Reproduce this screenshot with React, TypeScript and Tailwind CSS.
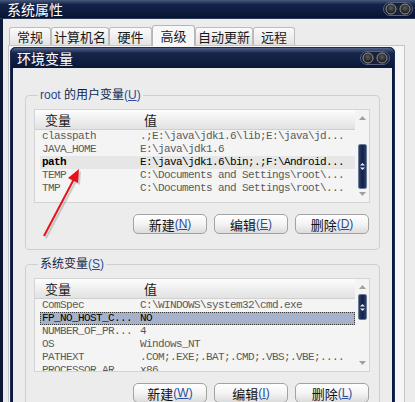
import React from 'react';

const tabs = [
  { label: '常规', w: 'w-[42px]' },
  { label: '计算机名', w: 'w-[58px]' },
  { label: '硬件', w: 'w-[43px]' },
  { label: '高级', w: 'w-[43px]', active: true },
  { label: '自动更新', w: 'w-[58px]' },
  { label: '远程', w: 'w-[42px]' },
];

const userVars = [
  { name: 'classpath', value: '.;E:\\java\\jdk1.6\\lib;E:\\java\\jd...' },
  { name: 'JAVA_HOME', value: 'E:\\java\\jdk1.6' },
  { name: 'path', value: 'E:\\java\\jdk1.6\\bin;.;F:\\Android...', hot: true },
  { name: 'TEMP', value: 'C:\\Documents and Settings\\root\\...' },
  { name: 'TMP', value: 'C:\\Documents and Settings\\root\\...' },
];

const sysVars = [
  { name: 'ComSpec', value: 'C:\\WINDOWS\\system32\\cmd.exe' },
  { name: 'FP_NO_HOST_C...', value: 'NO', selected: true },
  { name: 'NUMBER_OF_PR...', value: '4' },
  { name: 'OS', value: 'Windows_NT' },
  { name: 'PATHEXT', value: '.COM;.EXE;.BAT;.CMD;.VBS;.VBE;....' },
  { name: 'PROCESSOR_AR...', value: 'x86' },
];

function Knobs({ id }: { id: string }) {
  return (
    <svg width="30" height="14" viewBox="0 0 30 14">
      <defs>
        <radialGradient id={id} cx="50%" cy="40%" r="60%">
          <stop offset="0%" stopColor="#5c5c5c" />
          <stop offset="100%" stopColor="#111" />
        </radialGradient>
      </defs>
      <rect x="0.5" y="0.5" width="29" height="13" rx="6.5" fill="#1a2036" stroke="#56607a" />
      <circle cx="8" cy="7" r="5" fill={`url(#${id})`} stroke="#8e959f" strokeWidth="1" />
      <circle cx="22" cy="7" r="5" fill={`url(#${id})`} stroke="#8e959f" strokeWidth="1" />
    </svg>
  );
}

function Thumb({ cls }: { cls: string }) {
  return (
    <div className={`${cls} w-[9px] rounded-[2px] border border-[#6b7a98] bg-linear-to-r from-[#2c3c62] via-[#14224a] to-[#2c3c62] flex items-center justify-center`}>
      <svg width="5" height="7" viewBox="0 0 5 7">
        <polygon points="2.5,0 5,2.5 0,2.5" fill="#e8ecf4" />
        <polygon points="0,4.5 5,4.5 2.5,7" fill="#e8ecf4" />
      </svg>
    </div>
  );
}

function VarList({ rows, thumb }: { rows: { name: string; value: string; hot?: boolean; selected?: boolean }[]; thumb: string }) {
  return (
    <div className="w-[336px] h-[94px] bg-[#f4f4f4] border border-[#d4d4d4] flex overflow-hidden">
      <div className="w-[320px] flex flex-col">
        <div className="h-[20px] shrink-0 flex items-center pl-[10px] bg-linear-to-b from-[#fdfdfd] to-[#e2e2e2] border-b border-[#d0d0d0] text-[13px] text-[#1a1a1a] font-['Noto_Sans_CJK_SC',sans-serif]">
          <span className="w-[99px]">变量</span>
          <span>值</span>
        </div>
        <div className="pl-[5px] flex flex-col font-['Liberation_Mono',monospace] text-[11px] tracking-[-0.6px]">
          {rows.map((r) => (
            <div
              key={r.name}
              className={`h-[13px] w-[315px] flex items-center pl-[2px] whitespace-pre ${
                r.selected
                  ? 'bg-[#a6b2cc] text-black outline outline-1 outline-dotted outline-[#3a3a3a] -outline-offset-1'
                  : r.hot
                  ? 'bg-[#e6e6e6] text-black'
                  : 'text-[#5a5a5a]'
              }`}
            >
              <span className={`w-[98px] shrink-0 ${r.hot ? 'font-bold' : ''}`}>{r.name}</span>
              <span>{r.value}</span>
            </div>
          ))}
        </div>
      </div>
      <div className="w-[14px] flex flex-col items-center">
        <svg width="7" height="4" viewBox="0 0 7 4" className="mt-[6px] shrink-0">
          <polygon points="3.5,0 7,4 0,4" fill="#a0a0a0" />
        </svg>
        <Thumb cls={thumb} />
        <div className="flex-1" />
        <svg width="7" height="4" viewBox="0 0 7 4" className="mb-[6px] shrink-0">
          <polygon points="0,0 7,0 3.5,4" fill="#a0a0a0" />
        </svg>
      </div>
    </div>
  );
}

function Btn({ label, k }: { label: string; k: string }) {
  return (
    <button className="w-[74px] h-[20px] rounded-[5px] border border-[#a2a2a2] bg-linear-to-b from-[#ffffff] via-[#f4f4f4] to-[#dcdcdc] flex items-center justify-center text-[13px] leading-none text-[#111] font-['Noto_Sans_CJK_SC',sans-serif]">
      {label}
      <span className="text-[#2c4c9c] font-['Liberation_Sans',sans-serif] text-[12px]">
        (<span className="underline">{k}</span>)
      </span>
    </button>
  );
}

function Group({ title, k, rows, thumb, keys, cls }: { title: React.ReactNode; k: string; rows: any[]; thumb: string; keys: string[]; cls: string }) {
  return (
    <fieldset className={`${cls} ml-[12px] w-[355px] border border-[#cfcfcf] rounded-[4px] pl-[8px] pr-[9px] pt-[7px] pb-[15px]`}>
      <legend className="ml-[4px] px-[2px] h-[14px] leading-[14px] text-[12px] text-[#0f1f48] font-['Liberation_Sans','Noto_Sans_CJK_SC',sans-serif]">
        {title}
        <span className="text-[#2c4c9c]">
          (<span className="underline">{k}</span>)
        </span>
      </legend>
      <VarList rows={rows} thumb={thumb} />
      <div className="mt-[11px] w-[336px] pr-[1px] flex justify-end gap-[7px]">
        <Btn label="新建" k={keys[0]} />
        <Btn label="编辑" k={keys[1]} />
        <Btn label="删除" k={keys[2]} />
      </div>
    </fieldset>
  );
}

export default function App() {
  return (
    <div className="relative w-[415px] h-[402px] overflow-hidden flex flex-col bg-[#ececec] font-['Noto_Sans_CJK_SC',sans-serif]">
      {/* window title */}
      <div className="h-[19px] shrink-0 flex items-center justify-between pl-[7px] pr-[2px] bg-linear-to-b from-[#4a5a7c] via-[#14244a] via-25% to-[#081530] border-b border-[#2a3858]">
        <span className="text-[14px] text-white leading-none">系统属性</span>
        <Knobs id="k1" />
      </div>

      <div className="flex-1 flex flex-col border-l-[3px] border-[#0c1a38] pl-[5px] pt-[6px]">
        {/* tabs */}
        <div className="h-[20px] flex items-end ml-[1px]">
          {tabs.map((t) =>
            t.active ? (
              <div
                key={t.label}
                className={`${t.w} h-[21px] -mb-[1px] z-10 rounded-t-[3px] border border-b-0 border-[#b6b6b6] bg-[#f8f8f8] flex items-center justify-center text-[13px] text-[#1a1a1a]`}
              >
                {t.label}
              </div>
            ) : (
              <div
                key={t.label}
                className={`${t.w} h-[18px] rounded-t-[3px] border border-b-0 border-[#bcbcbc] bg-linear-to-b from-[#fbfbfb] to-[#e3e3e3] flex items-center justify-center text-[13px] text-[#1a1a1a]`}
              >
                {t.label}
              </div>
            )
          )}
        </div>

        {/* tab panel */}
        <div className="w-[397px] flex-1 border border-[#c6c6c6] bg-[#f6f6f6] pt-[1px] pl-[1px]">
          {/* environment variables dialog */}
          <div className="w-[385px] h-[400px] rounded-t-[5px] bg-[#0b193a] border border-[#1c2c52] flex flex-col">
            <div className="h-[20px] shrink-0 flex items-center justify-between pl-[6px] pr-[4px] rounded-t-[5px] bg-linear-to-b from-[#55658a] via-[#16264c] via-25% to-[#0a1736]">
              <span className="text-[14px] text-white leading-none">环境变量</span>
              <Knobs id="k2" />
            </div>
            <div className="flex-1 mx-[2px] bg-[#ececec] flex flex-col">
              <Group
                cls="mt-[20px]"
                title={
                  <>
                    <span className="text-[#27478f]">root</span> 的用户变量
                  </>
                }
                k="U"
                rows={userVars}
                thumb="mt-[24px] h-[45px]"
                keys={['N', 'E', 'D']}
              />
              <Group
                cls="mt-[7px]"
                title="系统变量"
                k="S"
                rows={sysVars}
                thumb="mt-[5px] h-[26px]"
                keys={['W', 'I', 'L']}
              />
            </div>
          </div>
        </div>
      </div>

      {/* red annotation arrow */}
      <svg className="absolute inset-0 pointer-events-none" width="415" height="402" viewBox="0 0 415 402">
        <g opacity="0.25" transform="translate(2,2)">
          <line x1="44" y1="236" x2="74" y2="179" stroke="#555" strokeWidth="2" />
          <polygon points="79,169 78,183 68,178" fill="#555" />
        </g>
        <line x1="44" y1="236" x2="74" y2="179" stroke="#e4141a" strokeWidth="2" />
        <polygon points="79,169 78,183 68,178" fill="#e4141a" />
      </svg>
    </div>
  );
}
